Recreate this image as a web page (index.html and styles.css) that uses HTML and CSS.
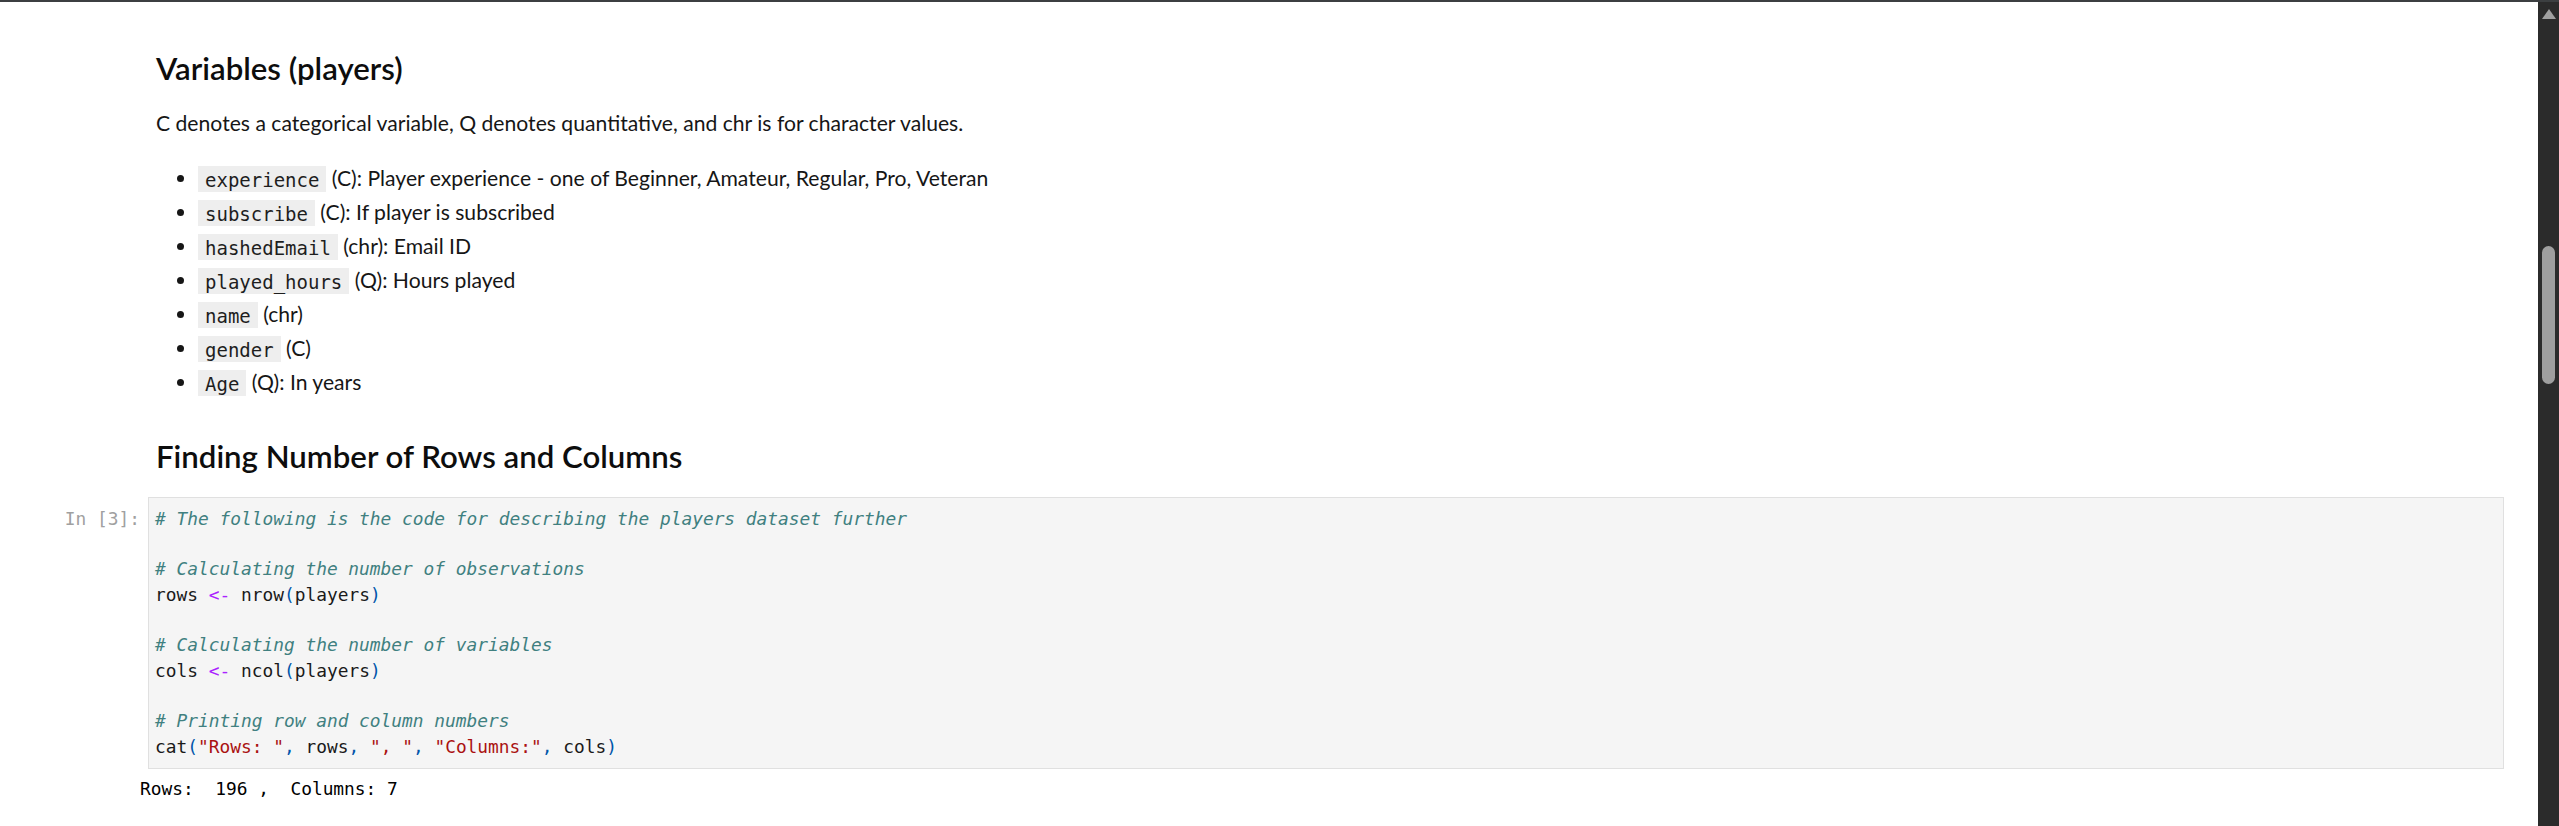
FILE: index.html
```html
<!DOCTYPE html>
<html>
<head>
<meta charset="utf-8">
<title>Notebook</title>
<link rel="stylesheet" href="styles.css">
</head>
<body>
<div class="topbar"></div>
<div class="window">
  <main class="notebook">
    <section class="cell md">
      <div class="prompt"></div>
      <div class="md-body">
        <h2 class="h-first">Variables (players)</h2>
        <p>C denotes a categorical variable, Q denotes quantitative, and chr is for character values.</p>
        <ul>
          <li><code>experience</code> (C): Player experience - one of Beginner, Amateur, Regular, Pro, Veteran</li>
          <li><code>subscribe</code> (C): If player is subscribed</li>
          <li><code>hashedEmail</code> (chr): Email ID</li>
          <li><code>played_hours</code> (Q): Hours played</li>
          <li><code>name</code> (chr)</li>
          <li><code>gender</code> (C)</li>
          <li><code>Age</code> (Q): In years</li>
        </ul>
        <h2 class="h-second">Finding Number of Rows and Columns</h2>
      </div>
    </section>
    <section class="cell code">
      <div class="prompt in">In [3]:</div>
      <pre class="input"><span class="cm"># The following is the code for describing the players dataset further</span>

<span class="cm"># Calculating the number of observations</span>
rows <span class="op">&lt;-</span> nrow<span class="pn">(</span>players<span class="pn">)</span>

<span class="cm"># Calculating the number of variables</span>
cols <span class="op">&lt;-</span> ncol<span class="pn">(</span>players<span class="pn">)</span>

<span class="cm"># Printing row and column numbers</span>
cat<span class="pn">(</span><span class="st">"Rows: "</span><span class="pn">,</span> rows<span class="pn">,</span> <span class="st">", "</span><span class="pn">,</span> <span class="st">"Columns:"</span><span class="pn">,</span> cols<span class="pn">)</span></pre>
    </section>
    <section class="output"><pre>Rows:  196 ,  Columns: 7</pre></section>
  </main>
  <div class="scrollbar">
    <div class="arrow"></div>
    <div class="thumb"></div>
  </div>
</div>
</body>
</html>
```
FILE: styles.css
```css
html, body {
  margin: 0;
  padding: 0;
  height: 100%;
  overflow: hidden;
  background: #ffffff;
}
body {
  font-family: "Lato", "Open Sans", sans-serif;
  color: #161616;
}
.topbar {
  height: 2px;
  background: #3c3f41;
}
.window {
  display: flex;
  height: 824px;
}
.notebook {
  flex: 1;
  padding-right: 34px;
  min-width: 0;
}
.cell {
  display: flex;
}
.prompt {
  width: 148px;
  flex: none;
  box-sizing: border-box;
}
.md-body {
  flex: 1;
  padding-left: 8px;
}
h2 {
  font-size: 31.2px;
  font-weight: 600;
  line-height: 36px;
  margin: 0;
  color: #0d0d0d;
}
.h-first {
  margin-top: 47.9px;
}
.h-second {
  margin-top: 39.3px;
}
p {
  font-size: 21.15px;
  line-height: 30px;
  margin: 22.45px 0 0 0;
}
ul {
  margin: 22.7px 0 0 0;
  padding-left: 42px;
  font-size: 21.15px;
  line-height: 34px;
}
li code {
  font-family: "DejaVu Sans Mono", "Liberation Mono", monospace;
  font-size: 19px;
  line-height: 1;
  background: #eeeeee;
  padding: 2.5px 7px 1.5px 7px;
  color: #1e1e1e;
}
.code {
  margin-top: 23.14px;
}
.prompt.in {
  font-family: "DejaVu Sans Mono", "Liberation Mono", monospace;
  font-size: 17.85px;
  line-height: 25.35px;
  color: #a0a0a0;
  text-align: right;
  padding-right: 8px;
  padding-top: 8.1px;
}
.input {
  flex: 1;
  margin: 0;
  background: #f5f5f5;
  border: 1px solid #e0e0e0;
  padding: 7.1px 6px 9.4px 6px;
  font-family: "DejaVu Sans Mono", "Liberation Mono", monospace;
  font-size: 17.85px;
  line-height: 25.35px;
  color: #1a1a1a;
}
.cm { color: #408080; font-style: italic; }
.op { color: #aa22ff; }
.pn { color: #0055aa; }
.st { color: #aa1111; }
.output {
  padding-left: 140px;
  margin-top: 7.1px;
}
.output pre {
  margin: 0;
  font-family: "DejaVu Sans Mono", "Liberation Mono", monospace;
  font-size: 17.85px;
  line-height: 25.35px;
  color: #000;
}
.scrollbar {
  width: 21px;
  flex: none;
  background: #2b2b2b;
  display: flex;
  flex-direction: column;
  align-items: center;
}
.arrow {
  margin-top: 7px;
  width: 0;
  height: 0;
  border-left: 7px solid transparent;
  border-right: 7px solid transparent;
  border-bottom: 10px solid #a0a0a0;
}
.thumb {
  margin-top: 227px;
  width: 13px;
  height: 138px;
  border-radius: 7px;
  background: #9f9f9f;
}
```
